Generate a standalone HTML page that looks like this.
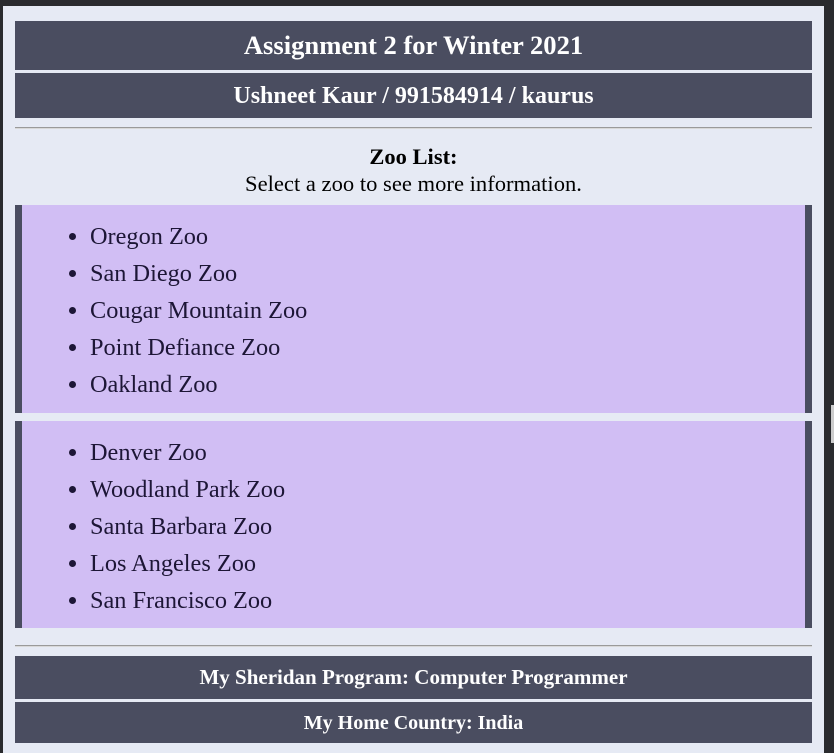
<!DOCTYPE html>
<html><head><style>
html,body{margin:0;padding:0;}
body{width:834px;height:753px;background:#2a2b2e;position:relative;overflow:hidden;font-family:"Liberation Serif",serif;}
#page{position:absolute;left:3px;top:6px;width:821px;height:747px;background:#e6eaf4;}
.bar{position:absolute;left:12px;width:797px;background:#4a4d60;color:#fff;font-weight:bold;text-align:center;white-space:nowrap;}
.hr{position:absolute;left:12px;width:797px;height:0;border-top:1px solid #9a9a9a;border-bottom:1px solid #d8d8d8;}
.box{position:absolute;left:12px;width:783px;background:#d1bef4;border-left:7px solid #4a4d60;border-right:7px solid #4a4d60;}
.box ul{margin:0;padding:0 0 0 68px;font-size:24.3px;color:#1d1636;}
.box li{height:37px;line-height:37px;}
.t{position:absolute;left:0;width:821px;text-align:center;color:#000;white-space:nowrap;}
#sb{position:absolute;left:831px;top:405px;width:3px;height:38px;background:#ccc;}
</style></head><body>
<div id="page">
<div class="bar" style="top:15px;height:49px;line-height:49px;font-size:26.6px;">Assignment 2 for Winter 2021</div>
<div class="bar" style="top:67px;height:45px;line-height:47px;font-size:24px;">Ushneet Kaur / 991584914 / kaurus</div>
<div class="hr" style="top:121px;"></div>
<div class="t" style="top:138px;font-size:22.5px;font-weight:bold;">Zoo List:</div>
<div class="t" style="top:165px;font-size:22.6px;">Select a zoo to see more information.</div>
<div class="box" style="top:199px;height:208px;"><ul style="padding-top:13px;">
<li>Oregon Zoo</li><li>San Diego Zoo</li><li>Cougar Mountain Zoo</li><li>Point Defiance Zoo</li><li>Oakland Zoo</li></ul></div>
<div class="box" style="top:415px;height:207px;"><ul style="padding-top:13px;">
<li>Denver Zoo</li><li>Woodland Park Zoo</li><li>Santa Barbara Zoo</li><li>Los Angeles Zoo</li><li>San Francisco Zoo</li></ul></div>
<div class="hr" style="top:639px;"></div>
<div class="bar" style="top:650px;height:43px;line-height:43px;font-size:21px;">My Sheridan Program: Computer Programmer</div>
<div class="bar" style="top:696px;height:41px;line-height:42px;font-size:20px;">My Home Country: India</div>
</div>
<div id="sb"></div>
</body></html>
